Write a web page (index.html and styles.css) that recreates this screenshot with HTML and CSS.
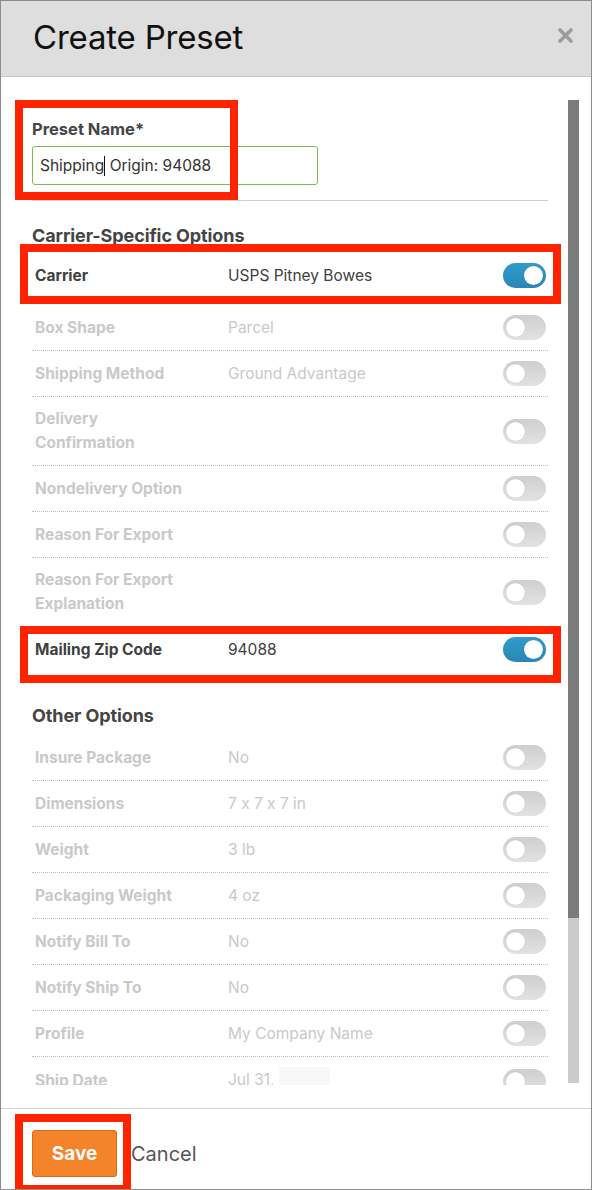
FILE: index.html
```html
<!DOCTYPE html>
<html lang="en">
<head>
<meta charset="utf-8">
<title>Create Preset</title>
<link rel="stylesheet" href="styles.css">
</head>
<body>
<div class="modal">
  <header class="modal-header">
    <h1 class="modal-title">Create Preset</h1>
    <button class="close" aria-label="Close">
      <svg width="15" height="15" viewBox="0 0 15 15"><path d="M2 2 L13 13 M13 2 L2 13" stroke="#9c9c9c" stroke-width="3.6" stroke-linecap="round"/></svg>
    </button>
  </header>
  <div class="modal-body">
    <div class="scroll">
      <div class="field mark mark-name">
        <label class="field-label">Preset Name*</label>
        <div class="input">Shipping<span class="caret"></span> Origin: 94088</div>
      </div>
      <hr class="rule">
      <h2 class="section-title">Carrier-Specific Options</h2>
      <div class="row on mark mark-carrier">
        <span class="label">Carrier</span><span class="value">USPS Pitney Bowes</span><span class="toggle is-on"></span>
      </div>
      <div class="row"><span class="label">Box Shape</span><span class="value">Parcel</span><span class="toggle"></span></div>
      <div class="row"><span class="label">Shipping Method</span><span class="value">Ground Advantage</span><span class="toggle"></span></div>
      <div class="row"><span class="label">Delivery Confirmation</span><span class="value"></span><span class="toggle"></span></div>
      <div class="row"><span class="label">Nondelivery Option</span><span class="value"></span><span class="toggle"></span></div>
      <div class="row"><span class="label">Reason For Export</span><span class="value"></span><span class="toggle"></span></div>
      <div class="row"><span class="label">Reason For Export Explanation</span><span class="value"></span><span class="toggle"></span></div>
      <div class="row on last mark mark-zip">
        <span class="label">Mailing Zip Code</span><span class="value">94088</span><span class="toggle is-on"></span>
      </div>
      <h2 class="section-title second">Other Options</h2>
      <div class="row"><span class="label">Insure Package</span><span class="value">No</span><span class="toggle"></span></div>
      <div class="row"><span class="label">Dimensions</span><span class="value">7 x 7 x 7 in</span><span class="toggle"></span></div>
      <div class="row"><span class="label">Weight</span><span class="value">3 lb</span><span class="toggle"></span></div>
      <div class="row"><span class="label">Packaging Weight</span><span class="value">4 oz</span><span class="toggle"></span></div>
      <div class="row"><span class="label">Notify Bill To</span><span class="value">No</span><span class="toggle"></span></div>
      <div class="row"><span class="label">Notify Ship To</span><span class="value">No</span><span class="toggle"></span></div>
      <div class="row"><span class="label">Profile</span><span class="value">My Company Name</span><span class="toggle"></span></div>
      <div class="row"><span class="label">Ship Date</span><span class="value">Jul 31, <span class="redact"></span></span><span class="toggle"></span></div>
    </div>
    <div class="scrollbar"><div class="thumb"></div></div>
  </div>
  <footer class="modal-footer">
    <div class="save-wrap mark mark-save"><button class="btn-save">Save</button></div>
    <button class="btn-cancel">Cancel</button>
  </footer>
</div>
</body>
</html>
```
FILE: styles.css
```css
*, *::before, *::after { box-sizing: border-box; }
html, body { margin: 0; padding: 0; background: #fff; }
body {
  font-family: Inter, "Noto Sans", "Liberation Sans", sans-serif;
  font-feature-settings: "calt" 0;
}

.modal {
  width: 592px;
  height: 1190px;
  border: 1px solid #8c8c8c;
  display: flex;
  flex-direction: column;
  overflow: hidden;
  background: #fff;
}

.modal-header {
  height: 76px;
  flex: none;
  background: #dedede;
  border-bottom: 1px solid #c8c8c8;
  display: flex;
  align-items: center;
  justify-content: space-between;
  padding: 0 18px 4px 32px;
}
.modal-title {
  margin: 0;
  font-size: 33px;
  font-weight: 400;
  color: #111;
  letter-spacing: -0.2px;
}
.close {
  border: 0;
  background: none;
  padding: 0;
  width: 15px;
  height: 15px;
  display: flex;
  margin-bottom: 2px;
}

.modal-body {
  flex: none;
  height: 1031px;
  display: flex;
  align-items: flex-start;
}
.scroll {
  width: 564px;
  height: 1008px;
  overflow: hidden;
  padding: 23px 17px 0 31px;
  flex: none;
}
.scrollbar {
  width: 11px;
  height: 983px;
  margin: 23px 0 0 3px;
  background: #cbcbcb;
  flex: none;
}
.thumb {
  height: 818px;
  background: #7b7b7b;
}

.mark { position: relative; }
.mark::after {
  content: "";
  position: absolute;
  border: 8px solid #ff2300;
  pointer-events: none;
}
.mark-name::after { top: 0; left: -17px; width: 223px; height: 100px; }
.mark-carrier::after { top: -9px; left: -12px; right: -13px; bottom: 0; }
.mark-zip::after { top: -1px; left: -12px; right: -13px; bottom: -4px; }
.mark-save::after { top: -16px; left: -17px; right: -14px; bottom: -16px; }

.field { padding-top: 19px; }
.field-label {
  display: block;
  font-size: 16.5px;
  font-weight: 700;
  line-height: 20px;
  color: #454545;
}
.input {
  margin-top: 7px;
  width: 286px;
  height: 39px;
  border: 1px solid #7dbb4c;
  border-radius: 3px;
  padding: 0 7px;
  display: flex;
  align-items: center;
  font-size: 15.5px;
  color: #333;
  white-space: pre;
}
.caret {
  display: inline-block;
  width: 1px;
  height: 20px;
  background: #111;
}

.rule {
  margin: 15px 0 0;
  border: 0;
  border-top: 1px solid #cfcfcf;
}

.section-title {
  margin: 23px 0 5px;
  font-size: 18px;
  line-height: 24px;
  font-weight: 700;
  color: #444;
  letter-spacing: -0.1px;
}
.section-title.second { margin: 25px 0 7px; }

.row {
  display: grid;
  grid-template-columns: 193px 1fr 43px;
  align-items: center;
  padding: 10px 2px 10px 3px;
  border-bottom: 1px dotted #bdbdbd;
  font-size: 15.5px;
  line-height: 24px;
  color: #c9c9c9;
}
.row .label { font-weight: 700; padding-right: 30px; }
.row.on { color: #404040; border-bottom-color: transparent; padding-bottom: 16px; }
.row.last { border-bottom: 0; padding-bottom: 17px; }

.toggle {
  width: 43px;
  height: 25px;
  border-radius: 13px;
  background: linear-gradient(#cfcfcf, #e2e2e2);
  position: relative;
  display: block;
}
.toggle::before {
  content: "";
  position: absolute;
  top: 3px;
  left: 3px;
  width: 19px;
  height: 19px;
  border-radius: 50%;
  background: #fff;
  box-shadow: 0 0 1px rgba(0,0,0,0.25);
}
.toggle.is-on {
  background: linear-gradient(#2f9ccd, #2a86b3);
}
.toggle.is-on::before { left: auto; right: 3px; }

.redact {
  display: inline-block;
  width: 51px;
  height: 28px;
  background: #f8f8f8;
  vertical-align: middle;
}

.modal-footer {
  flex: 1;
  border-top: 1px solid #cfcfcf;
  display: flex;
  align-items: flex-start;
  padding: 21px 0 0 31px;
  gap: 14px;
}
.btn-save {
  display: block;
  width: 85px;
  height: 47px;
  border: 1px solid #d8691d;
  border-radius: 3px;
  background: #f5832a;
  color: #fff;
  font-family: inherit;
  font-size: 19px;
  font-weight: 700;
  padding: 0;
}
.btn-cancel {
  border: 0;
  background: none;
  padding: 0;
  height: 47px;
  font-family: inherit;
  font-size: 20px;
  color: #555;
}
```
